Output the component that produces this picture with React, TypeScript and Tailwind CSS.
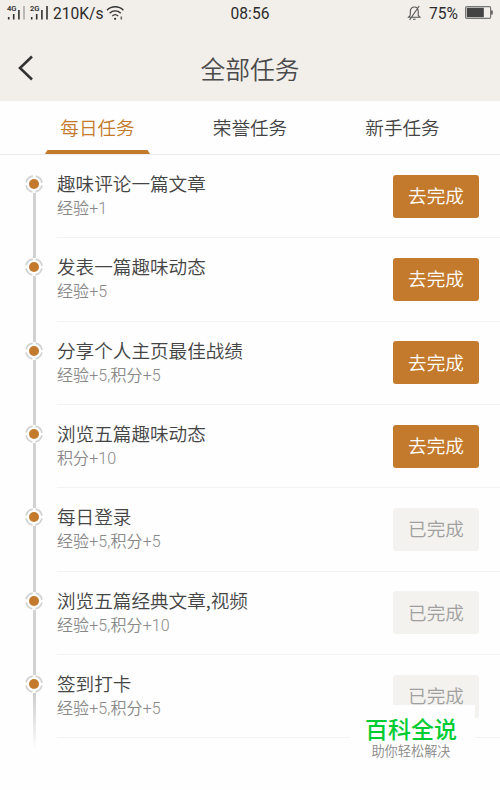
import React from "react";

interface Task {
  id: number;
  name: string;
  reward: string;
  done: boolean;
}

const tabs = ["每日任务", "荣誉任务", "新手任务"];

const tasks: Task[] = [
  { id: 1, name: "趣味评论一篇文章", reward: "经验+1", done: false },
  { id: 2, name: "发表一篇趣味动态", reward: "经验+5", done: false },
  { id: 3, name: "分享个人主页最佳战绩", reward: "经验+5,积分+5", done: false },
  { id: 4, name: "浏览五篇趣味动态", reward: "积分+10", done: false },
  { id: 5, name: "每日登录", reward: "经验+5,积分+5", done: true },
  { id: 6, name: "浏览五篇经典文章,视频", reward: "经验+5,积分+10", done: true },
  { id: 7, name: "签到打卡", reward: "经验+5,积分+5", done: true },
];

function classNames(...classes: string[]) {
  return classes.filter(Boolean).join(" ");
}

const Signal: React.FC<{ label: string; weak?: boolean }> = ({ label, weak }) => (
  <svg width="19" height="16" viewBox="0 0 19 16" className="shrink-0 overflow-visible">
    <text x="0" y="5" fontSize="7.4" fontWeight="600" fill="#333" textLength="9.6" lengthAdjust="spacingAndGlyphs">
      {label}
    </text>
    <path d="M1.7 11v2.6M6.7 8v5.6M11.9 4v9.6" stroke="#333" strokeWidth="1.6" />
    <path d="M17 0v13.6" stroke={weak ? "#aaa" : "#333"} strokeWidth="1.6" />
  </svg>
);

const StatusBar = () => (
  <div className="grid h-[28px] grid-cols-3 items-center px-[7px] font-['Roboto','Noto_Sans_CJK_SC',sans-serif] font-normal text-[#2c2c2c]">
    <div className="flex items-center">
      <Signal label="4G" weak />
      <span className="w-1" />
      <Signal label="2G" />
      <span className="ml-[4px] whitespace-nowrap text-[15.6px] leading-[26px]">210K/s</span>
      <svg width="19" height="16" viewBox="0 0 19 16" fill="none" stroke="#333" className="ml-[2px] shrink-0">
        <path d="M1 4.2c4.4-4.6 12-4.6 16.4 0M3.6 7.2c3.2-3 8-3 11.2 0M6.2 10.1c1.8-1.7 4.2-1.7 6 0" strokeWidth="1.3" />
        <circle cx="9.1" cy="12.8" r="1.1" fill="#333" stroke="none" />
        <path d="M15.3 10.5v3" strokeWidth="1.6" stroke="#666" />
      </svg>
    </div>
    <span className="text-center text-[15.6px] leading-[26px]">08:56</span>
    <div className="flex items-center justify-end">
      <svg width="15" height="16" viewBox="0 0 15 16" fill="none" stroke="#555" strokeWidth="1.1" className="mr-[7px] mb-[2px] shrink-0">
        <path d="M3.3 10.3V6.4c0-5.8 7.9-5.8 7.9 0v3.9l1.8 2H1.5l1.8-2M6 14.2h2.6M12.2 1L2.6 15" />
      </svg>
      <span className="text-[15.6px] leading-[26px]">75%</span>
      <svg width="28" height="13" viewBox="0 0 28 13" className="ml-[7px] mb-[3px] shrink-0">
        <rect x=".6" y=".6" width="25" height="11.8" rx="1.2" fill="none" stroke="#777" strokeWidth="1.2" />
        <rect x="1.8" y="1.8" width="17" height="9.4" fill="#444" />
        <path d="M26.9 4.5v4" stroke="#555" strokeWidth="1.6" />
      </svg>
    </div>
  </div>
);

const TaskRow: React.FC<{ task: Task; last: boolean }> = ({ task, last }) => (
  <li className="flex h-[83.35px]">
    {/* dashed ring with a solid dot, the connector runs down to the next marker */}
    <div className="mt-[20px] flex h-[83.35px] w-[57px] shrink-0 flex-col items-start">
      <svg width="18" height="18" viewBox="0 0 18 18" className="ml-[25px] shrink-0" fill="none">
        <circle cx="9" cy="9" r="8" stroke="#d2d2d2" strokeWidth="1.7" strokeDasharray="9.57 3" strokeDashoffset="-1.5" />
        <circle cx="9" cy="9" r="5" fill="#c47a2c" />
      </svg>
      <span
        className={classNames(
          "ml-[32.5px] w-[3px]",
          last ? "h-[56px] bg-linear-to-b from-[#cccccc] to-[#fefefe]" : "flex-1 bg-[#d2d2d2]"
        )}
      />
    </div>
    <div className="flex flex-1 justify-between border-b border-[#f3f3f3] pr-[21px]">
      <div className="pt-[15px]">
        <p className="text-[18.6px] leading-[25px] text-[#444]">{task.name}</p>
        <p className="mt-[2px] font-['Roboto','Noto_Sans_CJK_SC',sans-serif] text-[16px] leading-[24px] tracking-[0.1px] text-[#888]">
          {task.reward}
        </p>
      </div>
      <button
        type="button"
        className={classNames(
          "mt-[19.5px] h-[43px] w-[86px] rounded-[3px] pb-[3px] text-[18.6px] leading-[39px]",
          task.done ? "bg-[#f3f2ee] text-[#a0a0a0]" : "bg-[#c47a2c] text-white"
        )}
      >
        {task.done ? "已完成" : "去完成"}
      </button>
    </div>
  </li>
);

const App = () => {
  return (
    <div className="relative h-[790px] w-[500px] overflow-hidden bg-[#fefefe] font-['Noto_Sans_CJK_SC',sans-serif] font-[350]">
      <header className="h-[101px] bg-[#f2efea]">
        <StatusBar />
        <div className="grid h-[80px] grid-cols-[100px_1fr_100px] items-center">
          <svg width="18" height="26" viewBox="0 0 18 26" fill="none" stroke="#333" strokeWidth="2.6" className="ml-[17px]">
            <path d="M15 1.5L3 13l12 11.5" />
          </svg>
          <h1 className="text-center text-[24.8px] leading-[36px] text-[#4a4a4a]">全部任务</h1>
        </div>
      </header>
      <nav className="flex h-[54px] justify-between border-b border-[#ececec] px-[45px]">
        {tabs.map((tab, idx) => (
          <div
            key={tab}
            className={classNames(
              "flex w-[105px] flex-col justify-between text-center text-[18.6px] leading-[26px]",
              idx === 0 ? "text-[#c47a2c]" : "text-[#444]"
            )}
          >
            <span className="pt-[13px]">{tab}</span>
            {idx === 0 && (
              <svg width="105" height="4" viewBox="0 0 105 4">
                <path d="M2.5 0h100L105 4H0z" fill="#c47a2c" />
              </svg>
            )}
          </div>
        ))}
      </nav>
      <ul>
        {tasks.map((task, idx) => (
          <TaskRow key={task.id} task={task} last={idx === tasks.length - 1} />
        ))}
      </ul>
      <div className="absolute left-[350px] top-[705px] h-[85px] w-[125px] bg-[#fefefe] pt-[10px] text-center">
        <p className="pr-[3px] text-[23px] font-medium leading-[26px] text-[#0c3]">百科全说</p>
        <p className="mt-[1px] pr-[3px] text-[13.2px] leading-[18px] text-[#888]">助你轻松解决</p>
      </div>
    </div>
  );
};

export default App;
